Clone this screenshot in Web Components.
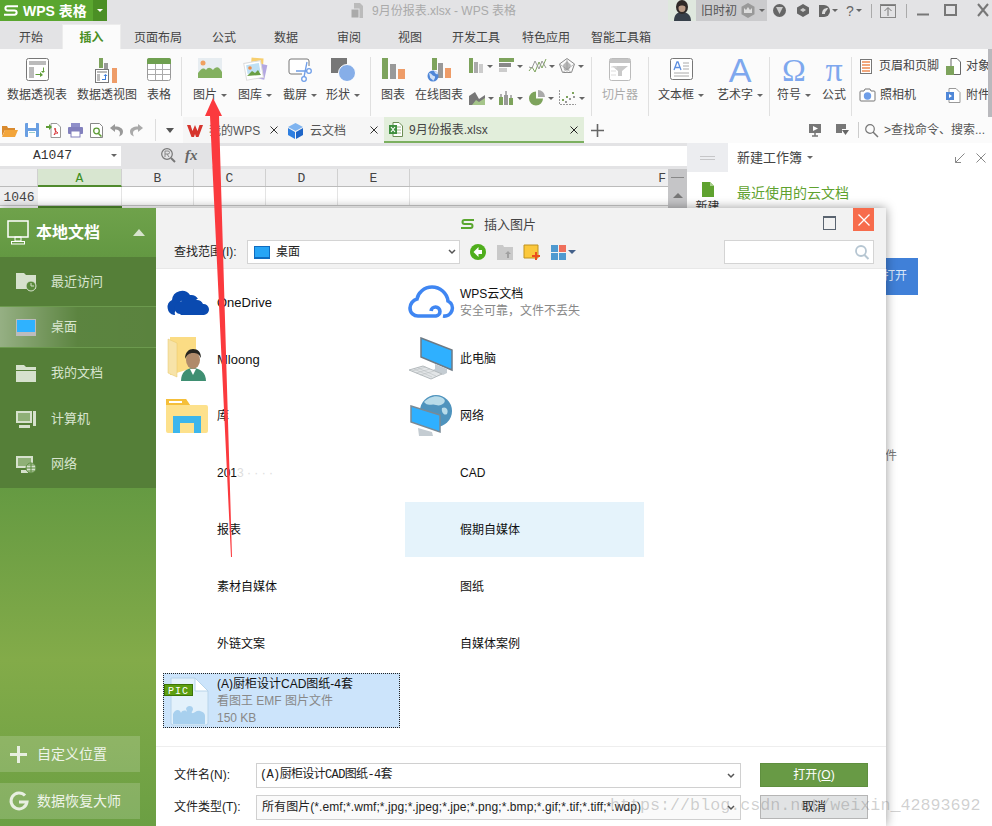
<!DOCTYPE html>
<html>
<head>
<meta charset="utf-8">
<title>WPS 表格</title>
<style>
    html, body { margin: 0; padding: 0; background: #fff; }
    body { font: 12px/16px "Liberation Sans", "Noto Sans CJK SC", sans-serif; color: #333; }
</style>
</head>
<body>
<wps-app></wps-app>

<script>
// all icons live here, drawn at the pixel size they have in the window
const ICONS = {
    logo: [16, 11, `<path d="M15 1.200H4.500a2.100 2.100 0 0 0 0 4.200h7a2.100 2.100 0 0 1 0 4.300H1" fill="none" stroke="#fff" stroke-width="2"/>`],
    dlogo: [15, 10, `<path d="M14 1H4.500a2 2 0 0 0 0 4h6a2 2 0 0 1 0 4H1" fill="none" stroke="#5aa62f" stroke-width="2"/>`],
    avatar: [28, 21, `<rect width="28" height="21" fill="#dfe8de"/><path d="M6 21c0-6 3-9 8-9s9 3 9 9z" fill="#37404a"/><ellipse cx="14" cy="7" rx="6" ry="7" fill="#2f2a28"/><ellipse cx="14" cy="8" rx="3.500" ry="4" fill="#b89a85"/><path d="M10 4c2-3 6-3 8 0v3c-2-2-6-2-8 0z" fill="#2f2a28"/>`],
    pivot: [23, 23, `<rect x=".5" y=".5" width="22" height="22" rx="2" fill="#fff" stroke="#777"/><rect x="3" y="3" width="17" height="4" fill="#bbb"/><rect x="3" y="9" width="5" height="11" fill="#bbb"/><path d="M11 18h4v-2l3 3-3 2v-2h-5zM18 12v3h-2l2 2 2-2h-1v-4z" fill="#5d9c35" transform="translate(-1 -2)"/>`],
    pivotchart: [24, 25, `<rect x="4" y="0" width="4" height="10" fill="#7da35c"/><rect x="9" y="5" width="4" height="20" fill="#999"/><rect x="17" y="10" width="5" height="15" fill="#ee9c68"/><rect x=".5" y="11.5" width="13" height="13" fill="#fff" stroke="#777"/><rect x="2" y="13" width="10" height="2" fill="#bbb"/><rect x="2" y="16" width="3" height="7" fill="#bbb"/><path d="M7 21h3v-3h-1.500l2-2 2 2h-1.500v4h-4z" fill="#3b7ddb"/>`],
    table: [24, 23, `<rect x=".5" y=".5" width="23" height="22" rx="2" fill="#fff" stroke="#999"/><path d="M0 2a2 2 0 0 1 2-2h20a2 2 0 0 1 2 2v4H0z" fill="#6fa050"/><path d="M1 11.500h22M1 16.500h22M8.500 6v16M15.500 6v16" stroke="#aaa" fill="none"/>`],
    picture: [24, 20, `<rect width="24" height="20" fill="#e7edf1"/><circle cx="5" cy="5" r="2.500" fill="#f0a060"/><path d="M0 20v-5c3-4 5-6 8-3 2-3 4-3 7 0 3-4 6-4 9 2v6z" fill="#83b05f"/>`],
    gallery: [24, 24, `<rect x="8" y="0" width="12" height="16" fill="#f7cf6f" transform="rotate(4 14 8)"/><rect x="13" y="6" width="10" height="15" fill="#b3a8e2" transform="rotate(12 18 13)"/><rect x="2" y="4" width="17" height="17" fill="#fff" stroke="#ddd" transform="rotate(-10 10 12)"/><rect x="4" y="6" width="13" height="9" fill="#bfe0f4" transform="rotate(-10 10 12)"/><circle cx="7" cy="10" r="1.800" fill="#ef8b46"/><path d="M4 18l5-5 3 2 3-3 3 5z" fill="#6a9f45"/>`],
    screenshot: [24, 24, `<path d="M14 16H3a2 2 0 0 1-2-2V3a2 2 0 0 1 2-2h16a2 2 0 0 1 2 2v5" fill="#fff" stroke="#777"/><circle cx="16" cy="21" r="2.300" fill="#fff" stroke="#6f9ee8" stroke-width="1.300"/><circle cx="21" cy="13" r="2.300" fill="#fff" stroke="#6f9ee8" stroke-width="1.300"/><path d="M19 4l-3 15M8 13h11" stroke="#6f9ee8" stroke-width="1.300" fill="none"/>`],
    shape: [24, 24, `<rect x="0" y="0" width="16" height="15" fill="#777"/><circle cx="16" cy="15" r="8.500" fill="#86aee8" stroke="#fff"/>`],
    chart: [23, 21, `<rect x="0" y="0" width="6" height="21" fill="#7da35c"/><rect x="8" y="6" width="6" height="15" fill="#999"/><rect x="16" y="11" width="7" height="10" fill="#ee9c68"/>`],
    onlinechart: [24, 24, `<rect x="5" y="0" width="5" height="12" fill="#7da35c"/><rect x="11" y="5" width="5" height="15" fill="#999"/><rect x="18" y="10" width="6" height="10" fill="#ee9c68"/><circle cx="6" cy="18" r="5.500" fill="#4f87d8"/><path d="M2 15c3 0 3 3 5 3s1 3-1 5c0-2-3-2-3-4zM7 13c2 0 4 1 4 3-2 1-3-1-4-3z" fill="#cfe0f7"/>`],
    scol: [15, 15, `<rect x="0" y="0" width="4" height="15" fill="#7da35c"/><rect x="5" y="4" width="4" height="11" fill="#aaa"/><rect x="10" y="6" width="4" height="9" fill="#ccc"/>`],
    sbar: [15, 15, `<rect x="0" y="0" width="15" height="4" fill="#7da35c"/><rect x="0" y="5" width="12" height="4" fill="#888"/><rect x="0" y="10" width="8" height="4" fill="#ccc"/>`],
    sline: [17, 15, `<path d="M0 13l3-4 3 5 4-10 3 6 4-9" stroke="#7da35c" fill="none"/><path d="M0 9l3 1 3-7 4 8 3-8 4 7" stroke="#999" fill="none"/>`],
    sradar: [16, 15, `<path d="M8 .5l7.500 5.500-3 8.500h-9L.5 6z" fill="none" stroke="#888"/><path d="M8 .5v14M.5 6l12 8.500M15.500 6l-12 8.500" stroke="#bbb" fill="none"/><path d="M8 3l4 4-2 5H5L4 7z" fill="#8a8a8a" opacity=".6"/>`],
    sarea: [16, 15, `<path d="M0 15V6l6-4 4 7 6-4v10z" fill="#777"/><path d="M3 15l4-5 3 2 6-4v7z" fill="#a5c58a"/>`],
    sstock: [15, 15, `<path d="M2 4v11M7 1v14M12 5v10" stroke="#666"/><rect x="0" y="7" width="4" height="8" fill="#7da35c"/><rect x="5" y="5" width="4" height="10" fill="#999"/><rect x="10" y="8" width="4" height="7" fill="#7da35c"/>`],
    spie: [16, 16, `<path d="M7 1.500a7 7 0 1 0 7 7H7z" fill="#7da35c"/><path d="M9 0a7 7 0 0 1 7 7H9z" fill="#aaa"/>`],
    sscatter: [17, 15, `<path d="M.5 0v14.500H17" stroke="#999" fill="none" stroke-dasharray="2 1"/><g fill="#7da35c"><rect x="3" y="9" width="2" height="2"/><rect x="7" y="6" width="2" height="2"/><rect x="13" y="2" width="2" height="2"/></g><g fill="#999"><rect x="6" y="11" width="2" height="2"/><rect x="10" y="8" width="2" height="2"/><rect x="14" y="6" width="2" height="2"/></g>`],
    slicer: [22, 23, `<rect x=".5" y=".5" width="21" height="22" rx="2" fill="#fff" stroke="#bbb"/><rect x="1" y="1" width="20" height="4" fill="#c4c4c4"/><path d="M3 8h16l-6 5v5h-4v-5z" fill="#c9c9c9"/><path d="M2 9h6M2 13h5M2 17h5" stroke="#ddd"/>`],
    textbox: [23, 22, `<rect x=".5" y=".5" width="22" height="21" rx="2" fill="#fff" stroke="#777"/><path d="M4 12l3-8h1l3 8M5.500 9.500h4" stroke="#5d8fe0" stroke-width="1.300" fill="none"/><path d="M13 5h6M13 8h6M13 11h6M4 15h15M4 18h15" stroke="#aaa" fill="none"/>`],
    header: [12, 15, `<rect x=".5" y=".5" width="11" height="14" fill="#fff" stroke="#777"/><path d="M2 3h8M2 6h8M2 9h8M2 12h8" stroke="#ee8a52" stroke-width="1.300"/>`],
    object: [15, 17, `<path d="M5 .5h6l3.500 3.500v12.500H5z" fill="#fff" stroke="#666"/><rect x="0" y="8" width="8" height="9" fill="#7da35c"/>`],
    camera: [15, 14, `<path d="M1 3h3l1-2h5l1 2h3a1 1 0 0 1 1 1v8a1 1 0 0 1-1 1H1a1 1 0 0 1-1-1V4a1 1 0 0 1 1-1z" fill="#fff" stroke="#777"/><circle cx="7.500" cy="8" r="3.700" fill="#6f9ee8"/>`],
    attach: [15, 15, `<path d="M3 .5h7l4 4v10H3z" fill="#fff" stroke="#999"/><rect x="0" y="4" width="8" height="8" fill="#4f87d8"/><path d="M3 6l3 2-3 2z" fill="#fff"/>`],
    qopen: [16, 13, `<path d="M0 2h5l1 2h7v2H3L0 12z" fill="#d98a2e"/><path d="M3 6h13l-3 7H0z" fill="#f3a53b"/>`],
    qsave: [14, 14, `<rect width="14" height="14" rx="1" fill="#6a9fe2"/><rect x="3" y="0" width="8" height="5" fill="#fff"/><rect x="3" y="8" width="8" height="6" fill="#fff"/><rect x="4" y="9" width="6" height="1" fill="#9cc"/>`],
    qpdf: [15, 15, `<path d="M5 .5h6l3.500 3.500v10.500H5z" fill="#fff" stroke="#999"/><path d="M0 3h3V1l3 3-3 3V5H0z" fill="#5d9c35"/><path d="M8 12c2-3 2-6 1-7-1 1 0 3 3 5-2 0-3 1-4 2z" fill="none" stroke="#d9363a"/>`],
    qprint: [15, 14, `<rect x="3" y="0" width="9" height="4" fill="#8f8fc9"/><rect x="0" y="4" width="15" height="7" rx="1" fill="#8280bd"/><rect x="3" y="8" width="9" height="6" fill="#fff" stroke="#8280bd"/>`],
    qpreview: [13, 15, `<path d="M.5.5h9l3 3v11H.5z" fill="#fff" stroke="#888"/><circle cx="6.500" cy="8" r="2.800" fill="none" stroke="#5d9c35" stroke-width="1.300"/><path d="M8.500 10.500l3 3" stroke="#5d9c35" stroke-width="1.500"/>`],
    qundo: [13, 13, `<path d="M5 0L0 4l5 4V5.500c3 0 5 1 5 4 0 1-.5 2-1 3 3-1 4-3 4-5 0-3-3-5-8-5z" fill="#999"/>`],
    qredo: [13, 13, `<path d="M8 0l5 4-5 4V5.500c-3 0-5 1-5 4 0 1 .5 2 1 3-3-1-4-3-4-5 0-3 3-5 8-5z" fill="#aaa"/>`],
    wps: [16, 12, `<path d="M0 0h3.500l2 6 2.500-6 2.500 6 2-6H16l-4.500 12H9L8 9l-1 3H4.500z" fill="#d6342c"/>`],
    cube: [15, 16, `<path d="M7.500 0L15 4 7.500 8 0 4z" fill="#7fb4f0"/><path d="M0 5l7 4v7l-7-4z" fill="#2f7fe0"/><path d="M15 5l-7 4v7l7-4z" fill="#1f66c8"/>`],
    xlsx: [14, 15, `<path d="M4 .5h6l3.500 3.500v10.500H4z" fill="#fff" stroke="#6d8f55"/><path d="M7 5h5M7 8h5M7 11h5" stroke="#9ab888"/><rect x="0" y="3" width="8" height="9" fill="#3f8f3f"/><path d="M2 5l4 5M6 5l-4 5" stroke="#fff" stroke-width="1.200"/>`],
    screen: [12, 13, `<rect width="12" height="9" fill="#777"/><path d="M4 2l5 2.500L4 7z" fill="#fff"/><path d="M3 12h6M6 9v3" stroke="#777" stroke-width="1.500"/>`],
    dock: [13, 12, `<path d="M0 0h10v5H6v4H0z" fill="#777"/><path d="M6 6h7l-3.500 5z" fill="#666"/>`],
    search: [13, 13, `<circle cx="5" cy="5" r="4.300" fill="none" stroke="#777" stroke-width="1.200"/><path d="M8 8l5 5" stroke="#777" stroke-width="1.500"/>`],
    tdoc: [12, 15, `<path d="M3 0h6l3 3v12H3z" fill="#bbb"/><rect x="0" y="6" width="8" height="9" fill="#aaa" stroke="#e3e3e5"/>`],
    crown: [14, 15, `<path d="M7 0l6.500 3.700v7.600L7 15 .5 11.300V3.700z" fill="#999"/><path d="M3 10V5l2 2 2-3 2 3 2-2v5z" fill="#ddd"/>`],
    t1: [13, 13, `<circle cx="6.500" cy="6.500" r="6.500" fill="#666"/><path d="M3 3h7L6.500 10z" fill="#ccc"/>`],
    t2: [12, 13, `<path d="M6 0l6 3.500v6L6 13 0 9.500v-6z" fill="#666"/><path d="M3 6l3-2 3 2-3 2z" fill="#ccc"/>`],
    t3: [11, 12, `<path d="M0 0h5a6 6 0 0 1 0 12H0z" fill="#666"/><path d="M3 9c0-4 2-6 6-6-1 3-3 3-3 6z" fill="#ddd"/>`],
    upload: [16, 14, `<rect x=".5" y=".5" width="15" height="13" fill="none" stroke="#888"/><path d="M8 12V4M4.500 7L8 3.500 11.500 7M1 1.500h14" stroke="#777" fill="none"/>`],
    mag: [14, 15, `<circle cx="6" cy="6" r="5.300" fill="none" stroke="#777" stroke-width="1.200"/><path d="M10 10l4 4" stroke="#777" stroke-width="2"/><path d="M4 3v6M4 3h3a1.500 1.500 0 0 1 0 3H4M6 6l2 3" stroke="#888" fill="none"/>`],
    newdoc: [12, 15, `<path d="M0 0h8l4 4v11H0z" fill="#5fa22f"/><path d="M8 0l4 4H8z" fill="#a9cf8c"/>`],
    shrink: [10, 10, `<path d="M9.500.5l-9 9M.5 4v5.500H6" stroke="#888" fill="none"/>`],
    closex: [10, 10, `<path d="M.5.5l9 9M9.500.5l-9 9" stroke="#888" fill="none"/>`],
    monitor: [22, 25, `<rect x="1" y="1" width="20" height="16" fill="none" stroke="#fff" stroke-width="1.500"/><rect x="8" y="17" width="6" height="4" fill="none" stroke="#fff"/><rect x="4.500" y="21.500" width="13" height="2.500" fill="none" stroke="#fff"/>`],
    recent: [21, 20, `<path d="M0 1h8l2 2h10v14H0z" fill="#d6e1cd"/><circle cx="15" cy="14" r="5" fill="#5a8a3c" stroke="#d6e1cd"/><path d="M15 11v3h3" stroke="#d6e1cd" fill="none"/>`],
    desktop: [20, 17, `<rect width="20" height="17" fill="#bcbcbc"/><rect x="1" y="1" width="18" height="12" fill="#2fb2ff"/>`],
    mydoc: [20, 17, `<path d="M0 0h8l2 2h10v3H0z" fill="#d6e1cd"/><rect x="0" y="6" width="20" height="11" fill="#d6e1cd"/>`],
    computer: [20, 17, `<rect x="0" y="0" width="16" height="12" fill="#d6e1cd"/><rect x="2" y="2" width="12" height="8" fill="#8fb077"/><rect x="17" y="0" width="3" height="15" fill="#d6e1cd"/><rect x="3" y="14" width="11" height="3" fill="#d6e1cd"/>`],
    network: [20, 17, `<rect x="0" y="0" width="17" height="12" fill="#d6e1cd"/><rect x="2" y="2" width="13" height="8" fill="#8fb077"/><rect x="5" y="14" width="7" height="3" fill="#d6e1cd"/><circle cx="15" cy="12" r="5" fill="#d6e1cd" stroke="#5a8a3c"/><path d="M10 12h10M15 7v10M11.500 9h7M11.500 15h7" stroke="#5a8a3c" fill="none"/>`],
    plus: [17, 17, `<path d="M7 0h3v7h7v3h-7v7H7v-7H0V7h7z" fill="#e8efe1"/>`],
    recover: [18, 18, `<path d="M15 3.500A8 8 0 1 0 17 10H9" fill="none" stroke="#e8efe1" stroke-width="3"/>`],
    sdesk: [16, 13, `<rect width="16" height="13" fill="#0f6cc0"/><rect x="1" y="1" width="14" height="10" fill="#27a5f5"/>`],
    back: [16, 16, `<circle cx="8" cy="8" r="8" fill="#4fae1c"/><path d="M8.500 3L3.500 8l5 5V10H12V6H8.500z" fill="#fff"/>`],
    up: [16, 15, `<path d="M0 0h6l1 2h9v13H0z" fill="#c9c9c9"/><path d="M11 6l3 3h-2v4h-2V9H8z" fill="#a0a0a0"/>`],
    newfolder: [16, 15, `<path d="M0 0h14v13H0z" fill="#fbc83c" stroke="#c0921f"/><path d="M9 10h3V7h2v3h3v2h-3v3h-2v-3H9z" fill="#ec4e20" transform="translate(-1 0)"/>`],
    views: [15, 15, `<rect width="7" height="7" fill="#4f9ad0"/><rect x="8" width="7" height="7" fill="#ef6f5c"/><rect y="8" width="7" height="7" fill="#4f9ad0"/><rect x="8" y="8" width="7" height="7" fill="#4f9ad0"/>`],
    lens: [14, 15, `<circle cx="6" cy="6" r="5" fill="none" stroke="#b6c6d2" stroke-width="1.800"/><path d="M9.500 10l4 4" stroke="#b6c6d2" stroke-width="2"/>`],
    onedrive: [44, 26, `<path d="M9 26a8 8 0 0 1-2-15 10 10 0 0 1 18-5 8 8 0 0 1 8 4H22a9 9 0 0 0-9 8 8 8 0 0 0-3 8z" fill="#0a4ab0"/><path d="M15 25a6 6 0 0 1 1-12 9 9 0 0 1 16-2 7 7 0 0 1 6 4 5.500 5.500 0 0 1 1 11H16z" fill="#0a4ab0"/>`],
    userfolder: [38, 44, `<path d="M2 0h26v30L2 38z" fill="#fbdc84"/><path d="M0 2l9 4v34l-9-4z" fill="#f7e3a8" stroke="#e7c66a" stroke-width=".5"/><path d="M13 44c0-8 5-13 12-13s13 5 13 13z" fill="#3f8f72"/><path d="M22 32l3 6 3-6z" fill="#fff"/><ellipse cx="25" cy="23" rx="7" ry="9" fill="#b08a6a"/><path d="M17 22c0-7 4-10 8-10 5 0 8 3 8 9-2-4-4-5-8-5s-6 2-8 6z" fill="#26241f"/>`],
    library: [42, 34, `<path d="M0 2a2 2 0 0 1 2-2h18l4 6h16a2 2 0 0 1 2 2v24a2 2 0 0 1-2 2H2a2 2 0 0 1-2-2z" fill="#fde18c"/><path d="M0 0h20l4 6H0z" fill="#f5bf3a"/><rect x="3" y="2" width="13" height="2" fill="#fff"/><path d="M7 34V17h28v17h-7V24H14v10z" fill="#3cb6ec"/>`],
    wpscloud: [46, 33, `<path d="M35 31a8 8 0 0 0 5-15C39 8 32 2 24 2 16 2 10 8 9 14 5 15 2 19 2 23c0 5 4 8 8 8h18a4.500 4.500 0 1 0-5-5" fill="none" stroke="#3f86f2" stroke-width="3.600"/>`],
    pc: [44, 42, `<path d="M12 0l31 12v20L12 19z" fill="#2fb0ff" stroke="#6d7a85" stroke-width="1.500"/><path d="M26 26l12 5v4l-4 2-12-4 4-2z" fill="#c4ccd2"/><path d="M0 32l14-4 19 8-11 5z" fill="#e2e5e7" stroke="#b4babd"/><path d="M5 31l18 8M9 30l18 8M3 33l14-4M7 35l14-4M11 37l14-4" stroke="#b4babd" stroke-width=".5" fill="none"/>`],
    netpc: [41, 41, `<circle cx="25" cy="16" r="16" fill="#4e93bd"/><path d="M13 7c5-6 15-8 20-3 3 3-3 8-8 6-4-2-8 2-12-3zM31 13c4-2 7 2 5 6-3 2-6-2-5-6z" fill="#b8dbe9"/><path d="M0 11l29 9v17L0 27z" fill="#2fb0ff" stroke="#7a8a96" stroke-width="1.500"/><path d="M7 33l14 4 1 4H8z" fill="#c4ccd2"/>`],
    pic: [46, 48, `<path d="M7 1h24l13 13v32a2 2 0 0 1-2 2H9a2 2 0 0 1-2-2z" fill="#e3f1fb" stroke="#b7d4ea"/><path d="M31 1l13 13H31z" fill="#fff" stroke="#b7d4ea"/><path d="M9 47V37c2-5 7-5 8-1 1-3 5-3 6-1 0-2-2-3 0-5 2-2 6-1 6 2 0 2-2 3-1 4 2 1 4-3 8-2 4 1 5 3 5 5v8z" fill="#a8d0ee"/><rect x=".5" y="7.500" width="28" height="11" fill="#5c9e10" stroke="#3d7508"/><text x="14.500" y="16.500" text-anchor="middle" font-family="Liberation Mono, monospace" font-size="10" letter-spacing="1" fill="#fff">PIC</text>`]
};

function setShadow(el, html) {
    if (!el.shadowRoot) el.attachShadow({ mode: 'open' });
    el.shadowRoot.innerHTML = html;
}

function ic(name) {
    return `<wps-icon name="${name}"></wps-icon>`;
}

class WpsIcon extends HTMLElement {
    connectedCallback() {
        const [w, h, body] = ICONS[this.getAttribute('name')];
        setShadow(this, `
            <style>
                :host { display: inline-block; width: ${w}px; height: ${h}px; flex: none; line-height: 0; }
                svg { display: block; overflow: visible; }
            </style>
            <svg width="${w}" height="${h}" viewBox="0 0 ${w} ${h}">${body}</svg>`);
    }
}

class WpsCaret extends HTMLElement {
    connectedCallback() {
        setShadow(this, `
            <style>
                :host {
                    display: inline-block; width: 0; height: 0; flex: none;
                    border: 3px solid transparent; border-top: 3px solid var(--caret, #666); border-bottom: 0;
                }
            </style>`);
    }
}

class WpsTitlebar extends HTMLElement {
    connectedCallback() {
        setShadow(this, `
            <style>
                :host { display: flex; height: 21px; background: #e3e3e5; align-items: center; color: #666; }
                .logo { width: 107px; height: 21px; background: #5aa62f; display: flex; align-items: center; color: #fff; font-size: 14px; font-weight: bold; box-sizing: border-box; padding-left: 3px; gap: 4px; }
                .name { flex: 1; white-space: nowrap; }
                .drop { width: 14px; height: 21px; background: #4b8f25; display: flex; align-items: center; justify-content: center; --caret: #fff; }
                .doc { margin-left: 244px; display: flex; align-items: center; gap: 9px; color: #aaa; white-space: nowrap; }
                .right { margin-left: auto; display: flex; height: 21px; align-items: center; }
                .user { width: 71px; height: 21px; background: #cbcbcd; display: flex; align-items: center; padding-left: 5px; box-sizing: border-box; font-size: 12px; color: #555; flex: none; }
                .user span { white-space: nowrap; flex: none; }
                .t { display: flex; align-items: center; gap: 2px; }
                .sep { width: 1px; height: 14px; background: #aaa; }
            </style>
            <div class="logo">${ic('logo')}<span class="name">WPS 表格</span><span class="drop"><wps-caret></wps-caret></span></div>
            <div class="doc">${ic('tdoc')}<span>9月份报表.xlsx - WPS 表格</span></div>
            <div class="right">
                ${ic('avatar')}
                <div class="user"><span>旧时初</span><wps-icon name="crown" style="margin:0 4px"></wps-icon><wps-caret></wps-caret></div>
                <div class="t" style="margin-left:6px">${ic('t1')}</div>
                <div class="t" style="margin-left:11px">${ic('t2')}</div>
                <div class="t" style="margin-left:10px">${ic('t3')}<wps-caret></wps-caret></div>
                <div class="t" style="margin-left:8px;font-size:14px;color:#666;width:22px">?<wps-caret></wps-caret></div>
                <div class="sep" style="margin-left:3px"></div>
                <div class="t" style="margin-left:8px">${ic('upload')}</div>
                <div class="sep" style="margin-left:10px"></div>
                <svg style="margin-left:10px" width="12" height="21"><path d="M0 14.500h12" stroke="#777" stroke-width="2"/></svg>
                <svg style="margin-left:15px" width="13" height="21"><rect x="1" y="5" width="11" height="10" fill="none" stroke="#777" stroke-width="2"/></svg>
                <svg style="margin-left:20px;margin-right:3px" width="12" height="21"><path d="M1 4l10 12M11 4L1 16" stroke="#777" stroke-width="2"/></svg>
            </div>`);
    }
}

class WpsTabs extends HTMLElement {
    connectedCallback() {
        const tabs = [['开始', 62], ['插入', 59], ['页面布局', 74], ['公式', 58], ['数据', 66], ['审阅', 60], ['视图', 62], ['开发工具', 70], ['特色应用', 70], ['智能工具箱', 80]];
        setShadow(this, `
            <style>
                :host { display: flex; height: 28px; background: #e3e3e5; }
                div { height: 25px; margin-top: 3px; line-height: 28px; text-align: center; color: #444; white-space: nowrap; box-sizing: border-box; }
                .on { background: #fbfbfb; color: #4b8f24; font-weight: bold; border: 1px solid #ececec; border-bottom: 0; line-height: 26px; }
            </style>
            ${tabs.map(([t, w]) => `<div class="${t === '插入' ? 'on' : ''}" style="width:${w}px">${t}</div>`).join('')}`);
    }
}

class RbItem extends HTMLElement {
    connectedCallback() {
        const caret = this.hasAttribute('caret') ? '<wps-caret></wps-caret>' : '';
        setShadow(this, `
            <style>
                :host { display: flex; flex-direction: column; align-items: center; flex: none; }
                .i { height: 30px; display: flex; align-items: flex-start; justify-content: center; padding-top: 1px; box-sizing: border-box; }
                .l { height: 16px; line-height: 16px; display: flex; align-items: center; gap: 4px; white-space: nowrap; color: #444; }
                :host([off]) .l { color: #aaa; }
            </style>
            <div class="i"><slot></slot></div>
            <div class="l">${this.getAttribute('label')}${caret}</div>`);
    }
}

class RbSep extends HTMLElement {
    connectedCallback() {
        setShadow(this, `<style>:host { display: block; width: 1px; height: 59px; background: #e0e0e0; flex: none; }</style>`);
    }
}

class RbGlyph extends HTMLElement {
    connectedCallback() {
        setShadow(this, `
            <style>
                :host { display: block; height: 28px; line-height: 24px; color: #7ea8ee; font-family: "Liberation Serif", serif; }
            </style>
            <slot></slot>`);
    }
}

class WpsRibbon extends HTMLElement {
    connectedCallback() {
        const small = ['scol', 'sbar', 'sline', 'sradar', 'sarea', 'sstock', 'spie', 'sscatter'];
        setShadow(this, `
            <style>
                :host { display: flex; height: 68px; background: #fbfbfb; padding-top: 8px; box-sizing: border-box; position: relative; overflow: hidden; }
                .sep1 { margin: 0 2px 0 3px; }
                .grid { width: 120px; margin: 1px 2px 0 6px; display: grid; grid-template-columns: repeat(4, 30px); grid-template-rows: 32px 28px; flex: none; }
                .cell { display: flex; align-items: flex-start; gap: 3px; }
                .cell wps-caret { margin-top: 7px; }
                .col { display: flex; flex-direction: column; gap: 13px; flex: none; padding-top: 1px; }
                .row { display: flex; align-items: center; gap: 7px; height: 16px; white-space: nowrap; color: #444; }
                .bar { position: absolute; right: 0; top: 0; width: 4px; height: 68px; background: #b9b9bd; }
            </style>
            <rb-item label="数据透视表" style="width:74px">${ic('pivot')}</rb-item>
            <rb-item label="数据透视图" style="width:66px">${ic('pivotchart')}</rb-item>
            <rb-item label="表格" style="width:38px">${ic('table')}</rb-item>
            <rb-sep class="sep1"></rb-sep>
            <rb-item label="图片" caret style="width:52px">${ic('picture')}</rb-item>
            <rb-item label="图库" caret style="width:38px">${ic('gallery')}</rb-item>
            <rb-item label="截屏" caret style="width:52px">${ic('screenshot')}</rb-item>
            <rb-item label="形状" caret style="width:34px">${ic('shape')}</rb-item>
            <rb-sep style="margin:0 0 0 10px"></rb-sep>
            <rb-item label="图表" style="width:44px">${ic('chart')}</rb-item>
            <rb-item label="在线图表" style="width:48px">${ic('onlinechart')}</rb-item>
            <div class="grid">${small.map(n => `<div class="cell">${ic(n)}<wps-caret></wps-caret></div>`).join('')}</div>
            <rb-sep></rb-sep>
            <rb-item label="切片器" off style="width:56px">${ic('slicer')}</rb-item>
            <rb-sep style="margin-right:2px"></rb-sep>
            <rb-item label="文本框" caret style="width:60px">${ic('textbox')}</rb-item>
            <rb-item label="艺术字" caret style="width:58px"><rb-glyph style="font-size:34px;font-family:'Liberation Sans'">A</rb-glyph></rb-item>
            <rb-sep style="margin:0"></rb-sep>
            <rb-item label="符号" caret style="width:48px"><rb-glyph style="font-size:32px">Ω</rb-glyph></rb-item>
            <rb-item label="公式" style="width:32px"><rb-glyph style="font-size:34px">π</rb-glyph></rb-item>
            <rb-sep style="margin:0 8px 0 1px"></rb-sep>
            <div class="col" style="width:86px">
                <div class="row">${ic('header')}<span>页眉和页脚</span></div>
                <div class="row" style="gap:5px">${ic('camera')}<span>照相机</span></div>
            </div>
            <div class="col">
                <div class="row" style="gap:5px">${ic('object')}<span>对象</span></div>
                <div class="row" style="gap:5px">${ic('attach')}<span>附件</span></div>
            </div>
            <div class="bar"></div>`);
    }
}

class WpsDocTabs extends HTMLElement {
    connectedCallback() {
        const quick = ['qopen', 'qsave', 'qpdf', 'qprint', 'qpreview', 'qundo', 'qredo'];
        const x = c => `<span class="x"><svg width="8" height="8"><path d="M.5.5l7 7M7.500.5l-7 7" stroke="${c}"/></svg></span>`;
        setShadow(this, `
            <style>
                :host { display: flex; height: 26px; background: #fbfbfb; align-items: stretch; color: #555; }
                .quick { width: 156px; display: flex; align-items: center; gap: 7px; padding-left: 2px; box-sizing: border-box; border-right: 1px solid #ddd; margin: 2px 0; flex: none; }
                .more { width: 27px; display: flex; align-items: center; justify-content: center; --caret: #555; }
                .more wps-caret { border-width: 4px; border-top-width: 5px; border-bottom-width: 0; }
                .tab { display: flex; align-items: center; gap: 6px; padding: 1px 0 0 4px; box-sizing: border-box; background: #f6f6f6; position: relative; white-space: nowrap; }
                .x { position: absolute; right: 6px; top: 9px; line-height: 0; }
                .on { background: #e2eedb; border-bottom: 2px solid #7cb060; padding-left: 5px; color: #444; }
                .plus { width: 26px; display: flex; align-items: center; justify-content: center; color: #666; }
                .tools { margin-left: auto; display: flex; align-items: center; }
                .sep { width: 1px; height: 16px; background: #ccc; }
            </style>
            <div class="quick">${quick.map(ic).join('')}</div>
            <div class="more"><wps-caret></wps-caret></div>
            <div class="tab" style="width:101px">${ic('wps')}<span>我的WPS</span>${x('#333')}</div>
            <div class="tab" style="width:100px;gap:7px">${ic('cube')}<span>云文档</span>${x('#333')}</div>
            <div class="tab on" style="width:200px">${ic('xlsx')}<span>9月份报表.xlsx</span>${x('#222')}</div>
            <div class="plus"><svg width="13" height="13"><path d="M6.500 0v13M0 6.500h13" stroke="#666" stroke-width="1.600"/></svg></div>
            <div class="tools">
                ${ic('screen')}<span style="width:15px"></span>${ic('dock')}
                <span class="sep" style="margin:0 6px 0 9px"></span>${ic('search')}
                <span style="margin:0 7px 0 6px;white-space:nowrap">&gt;查找命令、搜索...</span>
            </div>`);
    }
}

class WpsFormula extends HTMLElement {
    connectedCallback() {
        setShadow(this, `
            <style>
                :host { display: flex; height: 26px; background: #e3e3e5; align-items: center; padding-bottom: 1px; box-sizing: border-box; }
                .name { width: 121px; height: 20px; background: #fff; display: flex; align-items: center; justify-content: space-between; padding: 0 4px 0 33px; box-sizing: border-box; font: 13px "Liberation Mono", monospace; color: #333; }
                .mag { margin-left: 40px; line-height: 0; }
                .fx { margin-left: 10px; width: 22px; font: italic bold 15px "Liberation Serif", serif; color: #666; }
                .input { margin-left: 5px; flex: 1; height: 20px; background: #fff; }
            </style>
            <div class="name"><span>A1047</span><wps-caret></wps-caret></div>
            <div class="mag">${ic('mag')}</div>
            <div class="fx">fx</div>
            <div class="input"></div>`);
    }
}

class WpsGrid extends HTMLElement {
    connectedCallback() {
        const cols = [['A', 84], ['B', 72], ['C', 72], ['D', 72], ['E', 72]];
        setShadow(this, `
            <style>
                :host { display: flex; flex: 1; background: #fff; font: 13px "Liberation Mono", monospace; color: #444; }
                .sheet { flex: 1; }
                .head { display: flex; height: 17px; background: #efeff0; border-bottom: 1px solid #bbb; }
                .corner { width: 38px; }
                .head div { box-sizing: border-box; border-right: 1px solid #d0d0d0; text-align: center; line-height: 19px; }
                .head .a { background: #d8e6d0; color: #3f8f1f; border-bottom: 2px solid #4f8a2c; height: 18px; }
                .head .f { flex: 1; border: 0; text-align: right; padding-right: 2px; }
                .row { display: flex; height: 18px; border-bottom: 1px solid #c9c9c9; }
                .num { width: 38px; background: #efeff0; text-align: center; line-height: 22px; flex: none; }
                .row i { display: block; width: 71px; border-right: 1px solid #e4e4e4; flex: none; }
                .row .first { width: 83px; }
                .sel { height: 6px; border-top: 2px solid #4f8a2c; background: #fff; margin-left: 38px; width: 84px; }
                .scroll { width: 19px; background: #c5c5c7; flex: none; display: flex; flex-direction: column; align-items: center; }
                .scroll b { display: block; width: 13px; height: 1px; background: #888; margin-top: 8px; }
                .scroll wps-caret { border-top: 0; border-bottom: 5px solid #777; border-left-width: 5px; border-right-width: 5px; margin-top: 15px; }
            </style>
            <div class="sheet">
                <div class="head"><div class="corner"></div>${cols.map(([c, w], i) => `<div class="${i ? '' : 'a'}" style="width:${w}px">${c}</div>`).join('')}<div class="f">F</div></div>
                <div class="row"><div class="num">1046</div><i class="first"></i><i></i><i></i><i></i><i></i></div>
                <div class="sel"></div>
            </div>
            <div class="scroll"><b></b><wps-caret></wps-caret></div>`);
    }
}

class WpsPane extends HTMLElement {
    connectedCallback() {
        setShadow(this, `
            <style>
                :host { display: flex; width: 305px; flex: none; background: #fff; height: 683px; }
                .rail { width: 41px; flex: none; display: flex; flex-direction: column; align-items: center; }
                .grip { width: 41px; height: 29px; background: #ecedf0; display: flex; flex-direction: column; align-items: center; justify-content: center; gap: 2px; }
                .grip i { display: block; width: 15px; height: 1px; background: #c6c6c8; }
                .rail wps-icon { margin-top: 10px; }
                .rail span { font-size: 12px; color: #333; line-height: 14px; margin-top: 3px; }
                .body { flex: 1; padding-left: 9px; position: relative; }
                .head { height: 29px; display: flex; align-items: center; gap: 5px; color: #444; font-size: 13px; }
                .acts { margin-left: auto; display: flex; gap: 11px; margin-right: 6px; }
                .recent { color: #5fa22f; font-size: 14px; line-height: 18px; margin-top: 12px; }
                .open { width: 90px; height: 37px; margin: 56px 0 0 91px; background: #4080d8; color: #dbe8f8; text-align: center; line-height: 37px; font-size: 12px; padding-left: 44px; box-sizing: border-box; }
                .rest { margin: 153px 0 0 148px; color: #777; }
            </style>
            <div class="rail"><div class="grip"><i></i><i></i></div>${ic('newdoc')}<span>新建</span></div>
            <div class="body">
                <div class="head"><span>新建工作簿</span><wps-caret></wps-caret><span class="acts">${ic('shrink')}${ic('closex')}</span></div>
                <div class="recent">最近使用的云文档</div>
                <div class="open">打开</div>
                <div class="rest">件</div>
            </div>`);
    }
}

class NavItem extends HTMLElement {
    connectedCallback() {
        setShadow(this, `
            <style>
                :host { display: flex; align-items: center; flex: none; padding-left: 16px; gap: 15px; font-size: 13px; color: #d8e5cf; white-space: nowrap; box-sizing: border-box; }
                :host([on]) {
                    background: linear-gradient(90deg, rgba(255,255,255,.38), rgba(255,255,255,.04) 50%, rgba(255,255,255,.03));
                    border-top: 1px solid #6c9a4e; border-bottom: 1px solid #6c9a4e;
                }
            </style>
            <slot></slot>`);
    }
}

class NavButton extends HTMLElement {
    connectedCallback() {
        setShadow(this, `
            <style>
                :host { display: flex; align-items: center; width: 140px; height: 36px; background: rgba(255,255,255,.17); gap: 10px; padding-left: 10px; box-sizing: border-box; color: #eef4e8; font-size: 14px; white-space: nowrap; flex: none; }
            </style>
            <slot></slot>`);
    }
}

class DlgNav extends HTMLElement {
    connectedCallback() {
        setShadow(this, `
            <style>
                :host { display: flex; flex-direction: column; width: 156px; flex: none; background: linear-gradient(180deg, #659a42 280px, #83ab49 452px, #6b9f43 618px); }
                .top { height: 49px; display: flex; align-items: center; padding-left: 7px; gap: 7px; background: linear-gradient(180deg, #6fa24b, #639842); color: #fff; font-size: 16px; font-weight: bold; flex: none; }
                .tri { margin-left: 26px; width: 0; height: 0; border: 6px solid transparent; border-top: 0; border-bottom: 7px solid #d7e4cd; }
                .list { background: #557f38; flex: none; height: 231px; box-sizing: border-box; display: flex; flex-direction: column; }
                .grow { flex: 1; }
                .btns { display: flex; flex-direction: column; gap: 11px; padding-bottom: 7px; }
            </style>
            <div class="top">${ic('monitor')}<span>本地文档</span><i class="tri"></i></div>
            <div class="list">
                <nav-item style="height:49px;gap:14px">${ic('recent')}<span>最近访问</span></nav-item>
                <nav-item on style="height:42px">${ic('desktop')}<span>桌面</span></nav-item>
                <nav-item style="height:50px">${ic('mydoc')}<span>我的文档</span></nav-item>
                <nav-item style="height:42px">${ic('computer')}<span>计算机</span></nav-item>
                <nav-item style="height:48px">${ic('network')}<span>网络</span></nav-item>
            </div>
            <div class="grow"></div>
            <div class="btns">
                <nav-button>${ic('plus')}<span>自定义位置</span></nav-button>
                <nav-button style="gap:9px">${ic('recover')}<span>数据恢复大师</span></nav-button>
            </div>`);
    }
}

class FileEntry extends HTMLElement {
    connectedCallback() {
        setShadow(this, `
            <style>
                :host { display: flex; align-items: center; height: 55px; box-sizing: border-box; color: #111; white-space: nowrap; position: relative; }
                .icon { width: var(--iw, 54px); flex: none; display: flex; justify-content: center; padding-right: var(--ip, 6px); box-sizing: border-box; line-height: 0; }
                .text { line-height: 17px; margin-top: 2px; }
                :host([hover]) { background: #e5f3fb; }
                :host([sel]) { background: #cce4fb; outline: 1px dotted #222; outline-offset: -1px; }
                ::slotted([slot=sub]) { display: block; color: #888; }
            </style>
            <div class="icon"><slot name="icon"></slot></div>
            <div class="text"><slot></slot><slot name="sub"></slot></div>`);
    }
}

class DlgHeader extends HTMLElement {
    connectedCallback() {
        setShadow(this, `
            <style>
                :host { display: block; height: 61px; background: #f2f2f2; border-bottom: 1px solid #e8e8e8; box-sizing: border-box; color: #222; flex: none; }
                .title { height: 32px; display: flex; align-items: center; padding-left: 304px; position: relative; color: #444; font-size: 13px; }
                .title span { padding-top: 2px; margin-left: 9px; }
                .max { position: absolute; left: 667px; top: 8px; width: 11px; height: 11px; border: 1px solid #5a6470; border-top-width: 2px; }
                .close { position: absolute; left: 697px; top: 0; width: 21px; height: 23px; background: #f76c4c; display: flex; align-items: center; justify-content: center; }
                .row { display: flex; align-items: center; height: 24px; padding-left: 18px; }
                .lab { width: 73px; white-space: nowrap; }
                .sel { width: 213px; height: 24px; background: #fff; border: 1px solid #d4d4d4; box-sizing: border-box; display: flex; align-items: center; gap: 6px; padding-left: 6px; }
                .chev { margin-left: auto; margin-right: 3px; }
                .tool { display: flex; align-items: center; gap: 11px; margin-left: 10px; }
                .tool wps-caret { margin-left: -9px; --caret: #44618a; border-width: 4px; border-bottom-width: 0; }
                .find { margin-left: auto; margin-right: 12px; width: 150px; height: 24px; background: #fff; border: 1px solid #d4d4d4; box-sizing: border-box; display: flex; align-items: center; justify-content: flex-end; padding-right: 4px; }
            </style>
            <div class="title">${ic('dlogo')}<span>插入图片</span><div class="max"></div><div class="close"><svg width="12" height="12"><path d="M.5.5l11 11M11.500.5l-11 11" stroke="#fff" stroke-width="1.300"/></svg></div></div>
            <div class="row">
                <span class="lab">查找范围(I):</span>
                <div class="sel">${ic('sdesk')}<span>桌面</span><svg class="chev" width="8" height="6"><path d="M1 1l3 3 3-3" stroke="#555" stroke-width="1.500" fill="none"/></svg></div>
                <div class="tool">${ic('back')}${ic('up')}${ic('newfolder')}${ic('views')}<wps-caret></wps-caret></div>
                <div class="find">${ic('lens')}</div>
            </div>`);
    }
}

class DlgFooter extends HTMLElement {
    connectedCallback() {
        const chev = `<svg class="chev" width="8" height="6"><path d="M1 1l3 3 3-3" stroke="#555" stroke-width="1.500" fill="none"/></svg>`;
        setShadow(this, `
            <style>
                :host { display: grid; grid-template-columns: 82px 485px 108px; grid-template-rows: 25px 25px; column-gap: 0; row-gap: 7px; padding: 16px 0 0 18px; border-top: 1px solid #eee; height: 80px; box-sizing: border-box; color: #222; flex: none; }
                span { line-height: 25px; white-space: nowrap; }
                .f { border: 1px solid #d0d0d0; background: #fff; height: 25px; box-sizing: border-box; display: flex; align-items: center; padding-left: 3px; white-space: nowrap; overflow: hidden; }
                .t { background: #fafafa; padding-left: 5px; letter-spacing: .07px; }
                .chev { margin-left: auto; margin-right: 5px; flex: none; }
                .b { margin-left: 19px; height: 24px; width: 108px; box-sizing: border-box; text-align: center; line-height: 22px; border: 1px solid #5f8f3f; background: #689a45; color: #fff; }
                .c { background: #e1e3e4; border-color: #b5b5b5; color: #222; }
                u { text-underline-offset: 1px; }
            </style>
            <span>文件名(N):</span>
            <div class="f"><span style="font-family:'Liberation Mono','Noto Sans CJK SC',monospace;font-size:12px;letter-spacing:-.65px">(A)厨柜设计CAD图纸-4套</span>${chev}</div>
            <div class="b">打开(<u>O</u>)</div>
            <span>文件类型(T):</span>
            <div class="f t"><span>所有图片(*.emf;*.wmf;*.jpg;*.jpeg;*.jpe;*.png;*.bmp;*.gif;*.tif;*.tiff;*.wdp)</span>${chev}</div>
            <div class="b c">取消</div>`);
    }
}

class FileDialog extends HTMLElement {
    connectedCallback() {
        setShadow(this, `
            <style>
                :host { position: absolute; left: 0; top: 208px; width: 886px; height: 618px; display: flex; background: #fff; box-shadow: 0 0 10px rgba(0,0,0,.4); }
                .main { flex: 1; display: flex; flex-direction: column; min-width: 0; }
                .list { flex: 1; display: grid; grid-template-columns: 242px 239px; grid-auto-rows: 55px; row-gap: 2px; padding: 5px 0 0 7px; box-sizing: border-box; align-content: start; }
                file-entry:nth-child(even) { --iw: 55px; --ip: 3px; }
                .wide { font-size: 13px; }
            </style>
            <dlg-nav></dlg-nav>
            <div class="main">
                <dlg-header></dlg-header>
                <div class="list">
                    <file-entry><span slot="icon">${ic('onedrive')}</span><span class="wide">OneDrive</span></file-entry>
                    <file-entry><span slot="icon">${ic('wpscloud')}</span>WPS云文档<span slot="sub">安全可靠，文件不丢失</span></file-entry>
                    <file-entry><span slot="icon">${ic('userfolder')}</span><span class="wide">Mloong</span></file-entry>
                    <file-entry><span slot="icon">${ic('pc')}</span>此电脑</file-entry>
                    <file-entry><span slot="icon">${ic('library')}</span>库</file-entry>
                    <file-entry><span slot="icon">${ic('netpc')}</span>网络</file-entry>
                    <file-entry>201<span style="color:#ddd">3 · · · ·</span></file-entry>
                    <file-entry>CAD</file-entry>
                    <file-entry>报表</file-entry>
                    <file-entry hover>假期自媒体</file-entry>
                    <file-entry>素材自媒体</file-entry>
                    <file-entry>图纸</file-entry>
                    <file-entry>外链文案</file-entry>
                    <file-entry>自媒体案例</file-entry>
                    <file-entry sel style="width:237px"><span slot="icon">${ic('pic')}</span>(A)厨柜设计CAD图纸-4套<span slot="sub">看图王 EMF 图片文件</span><span slot="sub">150 KB</span></file-entry>
                </div>
                <dlg-footer></dlg-footer>
            </div>`);
    }
}

class WpsApp extends HTMLElement {
    connectedCallback() {
        setShadow(this, `
            <style>
                :host { display: block; position: relative; width: 992px; height: 826px; overflow: hidden; background: #fff; }
                .work { display: flex; height: 683px; }
                .left { flex: 1; display: flex; flex-direction: column; min-width: 0; }
                .arrow { position: absolute; left: 0; top: 0; pointer-events: none; }
                .mark { position: absolute; left: 610px; top: 796px; font: 16.7px/20px "Liberation Mono", monospace; color: rgba(110,110,110,.32); white-space: nowrap; }
            </style>
            <wps-titlebar></wps-titlebar>
            <wps-tabs></wps-tabs>
            <wps-ribbon></wps-ribbon>
            <wps-doctabs></wps-doctabs>
            <div class="work">
                <div class="left"><wps-formula></wps-formula><wps-grid></wps-grid></div>
                <wps-pane></wps-pane>
            </div>
            <file-dialog></file-dialog>
            <svg class="arrow" width="992" height="826"><polygon points="213,98 222,116 219,116 232,557 231,557 210,116 205,116" fill="#fb3a3e"/></svg>
            <div class="mark">https://blog.csdn.net/weixin_42893692</div>`);
    }
}

customElements.define('wps-icon', WpsIcon);
customElements.define('wps-caret', WpsCaret);
customElements.define('wps-titlebar', WpsTitlebar);
customElements.define('wps-tabs', WpsTabs);
customElements.define('rb-item', RbItem);
customElements.define('rb-sep', RbSep);
customElements.define('rb-glyph', RbGlyph);
customElements.define('wps-ribbon', WpsRibbon);
customElements.define('wps-doctabs', WpsDocTabs);
customElements.define('wps-formula', WpsFormula);
customElements.define('wps-grid', WpsGrid);
customElements.define('wps-pane', WpsPane);
customElements.define('nav-item', NavItem);
customElements.define('nav-button', NavButton);
customElements.define('dlg-nav', DlgNav);
customElements.define('file-entry', FileEntry);
customElements.define('dlg-header', DlgHeader);
customElements.define('dlg-footer', DlgFooter);
customElements.define('file-dialog', FileDialog);
customElements.define('wps-app', WpsApp);
</script>
</body>
</html>
